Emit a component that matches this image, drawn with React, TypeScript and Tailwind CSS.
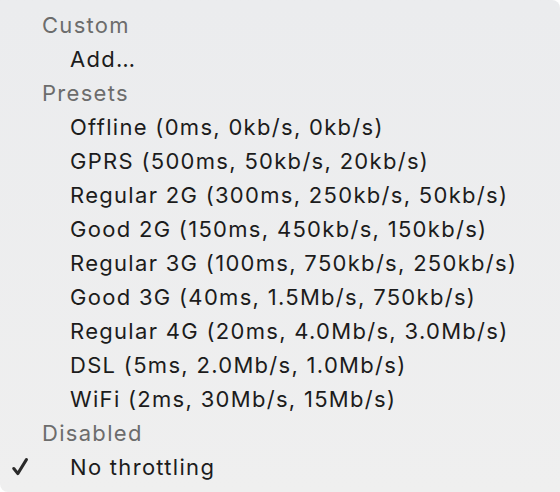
const rows: { label: string; kind: 'header' | 'item'; checked?: boolean }[] = [
  { label: 'Custom', kind: 'header' },
  { label: 'Add…', kind: 'item' },
  { label: 'Presets', kind: 'header' },
  { label: 'Offline (0ms, 0kb/s, 0kb/s)', kind: 'item' },
  { label: 'GPRS (500ms, 50kb/s, 20kb/s)', kind: 'item' },
  { label: 'Regular 2G (300ms, 250kb/s, 50kb/s)', kind: 'item' },
  { label: 'Good 2G (150ms, 450kb/s, 150kb/s)', kind: 'item' },
  { label: 'Regular 3G (100ms, 750kb/s, 250kb/s)', kind: 'item' },
  { label: 'Good 3G (40ms, 1.5Mb/s, 750kb/s)', kind: 'item' },
  { label: 'Regular 4G (20ms, 4.0Mb/s, 3.0Mb/s)', kind: 'item' },
  { label: 'DSL (5ms, 2.0Mb/s, 1.0Mb/s)', kind: 'item' },
  { label: 'WiFi (2ms, 30Mb/s, 15Mb/s)', kind: 'item' },
  { label: 'Disabled', kind: 'header' },
  { label: 'No throttling', kind: 'item', checked: true },
];

function Check() {
  return (
    <svg viewBox="0 0 16 18" className="absolute left-[12px] top-[8px] w-[16px] h-[18px]">
      <path d="M1.8 10.5 L5.8 15.6 L14.4 1.6" fill="none" stroke="#2a2a2a" strokeWidth="3" strokeLinecap="round" strokeLinejoin="round" />
    </svg>
  );
}

export default function App() {
  return (
    <div className="w-[560px] h-[492px] bg-white">
      <div
        className="w-full h-full rounded-tr-[8px] rounded-bl-[8px] bg-gradient-to-b from-[#ebecee] to-[#efefef] pt-[8px] text-[22px] tracking-[1.3px] antialiased"
        style={{ fontFamily: 'Inter, "Noto Sans", sans-serif' }}
      >
        {rows.map((r) => (
          <div key={r.label} className="relative h-[34px] flex items-center">
            {r.checked && <Check />}
            {r.kind === 'header' ? (
              <span className="pl-[42px] text-[#6c6c6c]">{r.label}</span>
            ) : (
              <span className="pl-[70px] text-[#1c1c1c]">{r.label}</span>
            )}
          </div>
        ))}
      </div>
    </div>
  );
}
